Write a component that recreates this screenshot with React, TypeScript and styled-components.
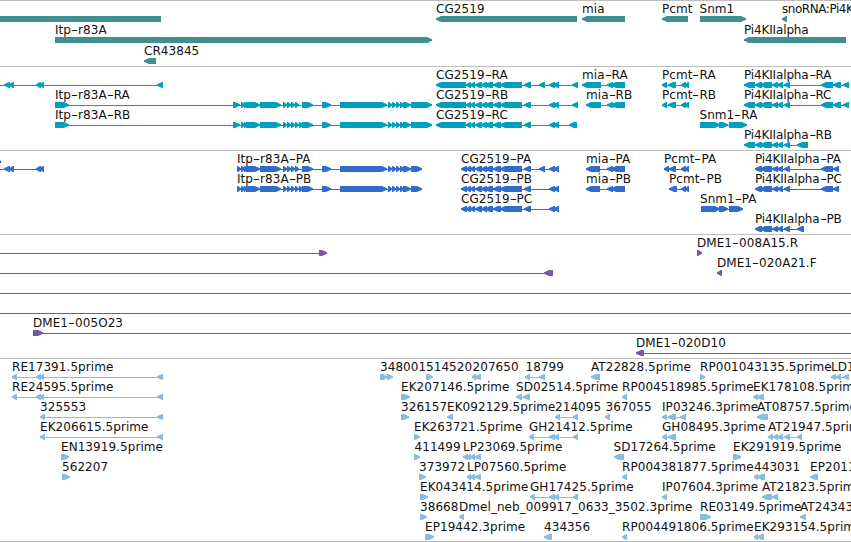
import React from 'react';

import styled, { createGlobalStyle } from 'styled-components';

type Direction = 'left' | 'right' | 'none';
type Span = [number, number];

interface Feature {
  name?: string;
  labelX?: number;
  dir: Direction;
  blocks: Span[];
  line?: Span;
}

interface TrackData {
  id: string;
  color: string;
  rowHeight: number;
  gap: number;
  rows: Feature[][];
}

const GlobalStyle = createGlobalStyle`
  body {
    margin: 0;
    background: #fff;
  }
`;

const Browser = styled.main`
  width: 851px;
  height: 542px;
  display: flex;
  flex-direction: column;
  overflow: hidden;
  box-sizing: border-box;
  border-bottom: 1px solid #bebebe;
  background: #fff;
`;

const TrackPanel = styled.section<{ $gap: number }>`
  flex: none;
  border-top: 1px solid #bebebe;
  padding-bottom: ${props => props.$gap}px;
`;

const TrackRow = styled.div<{ $height: number }>`
  position: relative;
  height: ${props => props.$height}px;
`;

const Glyphs = styled.svg<{ $color: string }>`
  display: block;
  width: 851px;
  height: 100%;
  overflow: visible;
  fill: ${props => props.$color};
`;

const Label = styled.span<{ $spacing: number }>`
  position: absolute;
  top: 1px;
  font: 12px/15px 'DejaVu Sans', sans-serif;
  letter-spacing: ${props => props.$spacing}px;
  color: #111;
  white-space: pre;
`;

const Hyphen = styled.span`
  display: inline-block;
  width: 7px;
  text-align: center;
  transform: scaleX(1.6);
`;

const left = (name: string | undefined, x: number, ...blocks: Span[]): Feature => ({
  name,
  labelX: x,
  dir: 'left',
  blocks,
});

const right = (name: string, x: number, ...blocks: Span[]): Feature => ({
  name,
  labelX: x,
  dir: 'right',
  blocks,
});

const upstream: Span[] = [[4, 10], [9, 14], [36, 41], [40, 44]];

const itpStart: Span[] = [[241, 245], [244, 247], [246, 260], [260, 281]];
const itpSmall: Span[] = [[283, 287], [287, 291], [291, 295], [295, 299]];
const itpEnd: Span[] = [
  [302, 313],
  [322, 331],
  [340, 387],
  [388, 392],
  [392, 396],
  [396, 400],
  [400, 404],
  [403, 411],
];

const cgCore: Span[] = [[466, 471], [470, 475], [475, 482], [481, 487], [485, 493], [493, 501], [500, 522], [524, 531]];
const cgExtra: Span = [539, 545];
const cgTail: Span[] = [[549, 555], [553, 559]];

const pcmtTail: Span[] = [[681, 686], [685, 689]];
const piCore: Span[] = [[755, 762], [760, 772], [772, 778], [777, 783], [784, 790]];
const piRA: Span[] = [[744, 755], ...piCore, [821, 833], [833, 841], [843, 849]];

const tracks: TrackData[] = [
  {
    id: 'gene',
    color: '#3f8f94',
    rowHeight: 21,
    gap: 2,
    rows: [
      [
        { dir: 'none', blocks: [[0, 161]] },
        left('CG2519', 436, [436, 577]),
        left('mia', 582, [582, 625]),
        left('Pcmt', 662, [662, 688]),
        right('Snm1', 699.5, [700, 746]),
        left('snoRNA:Pi4KIIalpha', 782, [782, 787]),
      ],
      [right('Itp-r83A', 55, [55, 432]), left('Pi4KIIalpha', 744, [744, 846])],
      [left('CR43845', 144, [144, 156])],
    ],
  },
  {
    id: 'transcript',
    color: '#009fbf',
    rowHeight: 20,
    gap: 3,
    rows: [
      [
        { dir: 'left', line: [0, 163], blocks: [...upstream, [157, 163]] },
        left('CG2519-RA', 436, [436, 466], ...cgCore, cgExtra, ...cgTail, [572, 578]),
        left('mia-RA', 582, [582, 601], [607, 613], [611, 625]),
        left('Pcmt-RA', 662, [662, 667], [668, 676], ...pcmtTail),
        left('Pi4KIIalpha-RA', 744, ...piRA),
      ],
      [
        right('Itp-r83A-RA', 55, [55, 69], [233, 240], ...itpStart, ...itpSmall, ...itpEnd, [411, 432]),
        left('CG2519-RB', 436, [436, 466], ...cgCore, ...cgTail, [572, 578]),
        left('mia-RB', 586, [586, 601], [607, 613], [611, 625]),
        left('Pcmt-RB', 662, [662, 667], [668, 676], ...pcmtTail),
        left('Pi4KIIalpha-RC', 744, ...piRA),
      ],
      [
        right('Itp-r83A-RB', 55, [55, 69], [233, 240], ...itpStart, ...itpSmall, [299, 303], ...itpEnd, [411, 432]),
        left('CG2519-RC', 436, [436, 466], ...cgCore, ...cgTail, [569, 577]),
        right('Snm1-RA', 699.5, [700, 720], [719, 728], [729, 747]),
      ],
      [left('Pi4KIIalpha-RB', 744, [744, 755], ...piCore, [797, 808])],
    ],
  },
  {
    id: 'protein',
    color: '#306ccc',
    rowHeight: 20,
    gap: 3,
    rows: [
      [
        { name: 'A', labelX: -7, dir: 'left', line: [0, 44], blocks: upstream },
        right('Itp-r83A-PA', 237, [237, 241], ...itpStart, ...itpSmall, ...itpEnd, [411, 422]),
        left('CG2519-PA', 461, [461, 467], ...cgCore, cgExtra, ...cgTail),
        left('mia-PA', 586, [586, 600], [607, 613], [611, 625]),
        left('Pcmt-PA', 664, [664, 669], [669, 676], ...pcmtTail),
        left('Pi4KIIalpha-PA', 755, ...piCore, [821, 833], [833, 839]),
      ],
      [
        right('Itp-r83A-PB', 237, [237, 241], ...itpStart, ...itpSmall, [299, 303], ...itpEnd, [411, 422]),
        left('CG2519-PB', 461, [461, 467], ...cgCore, ...cgTail),
        left('mia-PB', 586, [586, 600], [607, 613], [611, 625]),
        left('Pcmt-PB', 669, [669, 677], ...pcmtTail),
        left('Pi4KIIalpha-PC', 755, ...piCore, [821, 833], [833, 839]),
      ],
      [
        left('CG2519-PC', 461, [461, 467], ...cgCore, ...cgTail),
        right('Snm1-PA', 700, [701, 720], [719, 728], [729, 743]),
      ],
      [left('Pi4KIIalpha-PB', 755, ...piCore, [797, 804])],
    ],
  },
  {
    id: 'bac',
    color: '#7557a8',
    rowHeight: 20,
    gap: 3,
    rows: [
      [{ dir: 'right', line: [0, 327], blocks: [[319, 327]] }, right('DME1-008A15.R', 697, [697, 702])],
      [{ dir: 'left', line: [0, 553], blocks: [[544, 553]] }, left('DME1-020A21.F', 717, [717, 722])],
      [{ dir: 'none', line: [0, 851], blocks: [] }],
      [{ dir: 'none', line: [0, 851], blocks: [] }],
      [{ name: 'DME1-005O23', labelX: 33, dir: 'right', line: [33, 851], blocks: [[33, 43]] }],
      [{ name: 'DME1-020D10', labelX: 636, dir: 'left', line: [636, 851], blocks: [[636, 644]] }],
    ],
  },
  {
    id: 'est',
    color: '#87bdde',
    rowHeight: 20,
    gap: 2,
    rows: [
      [
        left('RE17391.5prime', 12, [12, 17], [36, 41], [40, 44], [157, 163]),
        right('348001', 380, [380, 388], [387, 393]),
        right('514520', 426, [426, 433]),
        left('207650', 472.5, [472, 476], [475, 481]),
        left('18799', 525.5, [525, 530], [539, 545]),
        left('AT22828.5prime', 591, [591, 600]),
        right('RP001043135.5prime', 700, [700, 705]),
        left('LD10322.5prime', 831, [831, 836], [836, 841], [843, 849]),
      ],
      [
        left('RE24595.5prime', 12, [12, 17], [36, 41], [40, 44], [157, 163]),
        right('EK207146.5prime', 401, [401, 410]),
        left('SD02514.5prime', 516, [516, 522], [523, 530]),
        left('RP004518985.5prime', 622, [622, 627]),
        left('EK178108.5prime', 753, [753, 758], [757, 764]),
      ],
      [
        left('325553', 40, [40, 45], [157, 163]),
        right('326157', 401, [401, 409]),
        left('EK092129.5prime', 447, [447, 453]),
        left('214095', 555, [555, 560], [573, 578]),
        left('367055', 605.5, [605, 610]),
        left('IP03246.3prime', 662, [662, 667], [668, 676], [680, 686]),
        left('AT08757.5prime', 757, [757, 768]),
      ],
      [
        left('EK206615.5prime', 40, [40, 45], [157, 163]),
        right('EK263721.5prime', 414, [414, 420]),
        left('GH21412.5prime', 529, [529, 534], [549, 555], [554, 559], [573, 578]),
        left('GH08495.3prime', 662, [662, 667], [668, 676]),
        left('AT21947.5prime', 768, [768, 773], [773, 778], [777, 783], [784, 790], [797, 802]),
      ],
      [
        right('EN13919.5prime', 61, [61, 69]),
        right('411499', 414.5, [414, 420]),
        left('LP23069.5prime', 463, [463, 468], [467, 471], [470, 475], [475, 481]),
        left('SD17264.5prime', 613.5, [614, 624]),
        right('EK291919.5prime', 733, [733, 741]),
      ],
      [
        right('562207', 62, [62, 70]),
        right('373972', 419, [419, 426]),
        left('LP07560.5prime', 467, [467, 471], [470, 475], [475, 481]),
        left('RP004381877.5prime', 622, [622, 627]),
        left('443031', 754, [754, 758], [757, 765]),
        left('EP2011', 810, [810, 818]),
      ],
      [
        right('EK043414.5prime', 420, [420, 428]),
        left('GH17425.5prime', 530, [530, 535], [549, 555], [554, 559], [573, 578]),
        left('IP07604.3prime', 662, [662, 667]),
        left('AT21823.5prime', 762, [762, 772], [772, 778]),
      ],
      [
        right('38668', 420, [420, 427]),
        left('Dmel_neb_009917_0633_3502.3prime', 459, [459, 464]),
        right('RE03149.5prime', 700, [700, 711]),
        left('AT24343.5prime', 800, [800, 806]),
      ],
      [
        right('EP19442.3prime', 425, [425, 434]),
        left('434356', 544, [544, 552]),
        left('RP004491806.5prime', 622, [622, 627]),
        left('EK293154.5prime', 754, [754, 758], [757, 764]),
      ],
    ],
  },
];

// top of the 6px high block inside a row
const BLOCK_TOP = 15;

// arrow heads are blunt: the tip is a bit over 1px high
const blockPoints = ([x1, x2]: Span, dir: Direction) => {
  const head = Math.min(5, x2 - x1 - 1);
  const top = BLOCK_TOP;
  const mid = BLOCK_TOP + 3;
  const bottom = BLOCK_TOP + 6;
  if (dir === 'left') {
    const neck = x1 + head;
    return `${x1},${mid - 0.7} ${neck},${top} ${x2},${top} ${x2},${bottom} ${neck},${bottom} ${x1},${mid + 0.7}`;
  }
  if (dir === 'right') {
    const neck = x2 - head;
    return `${x1},${top} ${neck},${top} ${x2},${mid - 0.7} ${x2},${mid + 0.7} ${neck},${bottom} ${x1},${bottom}`;
  }
  return `${x1},${top} ${x2},${top} ${x2},${bottom} ${x1},${bottom}`;
};

const labelSpacing = (name: string) => {
  if (name.startsWith('snoRNA')) return -0.45;
  if (name.startsWith('Pi4K')) return -0.15;
  return 0.06;
};

const FeatureGlyph = ({ feature }: { feature: Feature }) => {
  const { blocks, dir } = feature;
  const line = feature.line || [blocks[0][0], blocks[blocks.length - 1][1]];
  return (
    <g>
      <rect x={line[0]} y={BLOCK_TOP + 3} width={line[1] - line[0]} height={1} />
      {blocks.map((block, i) => (
        <polygon key={i} points={blockPoints(block, dir)} />
      ))}
    </g>
  );
};

const FeatureLabel = ({ name, x }: { name: string; x: number }) => (
  <Label $spacing={labelSpacing(name)} style={{ left: x }}>
    {name.split('-').map((part, i) => (
      <React.Fragment key={i}>
        {i > 0 && <Hyphen>-</Hyphen>}
        {part}
      </React.Fragment>
    ))}
  </Label>
);

const Track = ({ track }: { track: TrackData }) => (
  <TrackPanel $gap={track.gap}>
    {track.rows.map((features, i) => (
      <TrackRow key={i} $height={track.rowHeight}>
        <Glyphs $color={track.color}>
          {features.map((feature, j) => (
            <FeatureGlyph key={j} feature={feature} />
          ))}
        </Glyphs>
        {features.map(
          (feature, j) => feature.name && <FeatureLabel key={j} name={feature.name} x={feature.labelX || 0} />
        )}
      </TrackRow>
    ))}
  </TrackPanel>
);

const App = () => (
  <>
    <GlobalStyle />
    <Browser>
      {tracks.map(track => (
        <Track key={track.id} track={track} />
      ))}
    </Browser>
  </>
);

export default App;
